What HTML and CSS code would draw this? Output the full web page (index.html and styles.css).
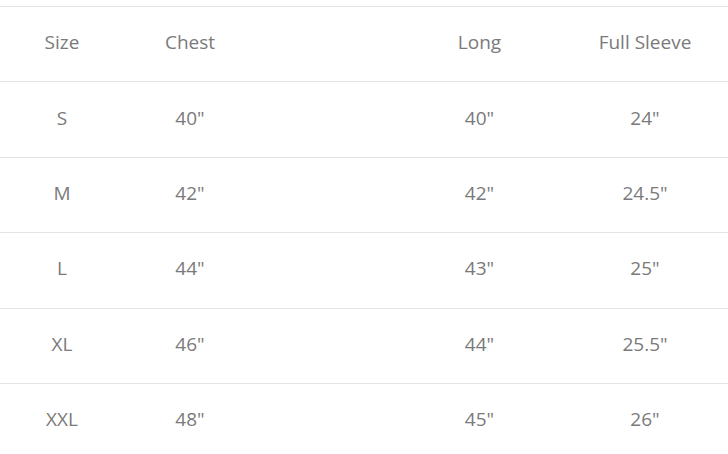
FILE: index.html
```html
<!DOCTYPE html>
<html>
<head>
<meta charset="utf-8">
<link rel="stylesheet" href="styles.css">
</head>
<body>
<div class="wrap">
  <table class="sizes">
    <colgroup>
      <col class="c1"><col class="c2"><col class="c3"><col class="c4"><col class="c5">
    </colgroup>
    <tr class="head"><td>Size</td><td>Chest</td><td></td><td>Long</td><td>Full Sleeve</td></tr>
    <tr><td>S</td><td>40"</td><td></td><td>40"</td><td>24"</td></tr>
    <tr><td>M</td><td>42"</td><td></td><td>42"</td><td>24.5"</td></tr>
    <tr><td>L</td><td>44"</td><td></td><td>43"</td><td>25"</td></tr>
    <tr><td>XL</td><td>46"</td><td></td><td>44"</td><td>25.5"</td></tr>
    <tr><td>XXL</td><td>48"</td><td></td><td>45"</td><td>26"</td></tr>
  </table>
</div>
</body>
</html>
```
FILE: styles.css
```css
html, body {
  margin: 0;
  padding: 0;
  background: #fff;
}
.wrap {
  padding-top: 6px;
}
.sizes {
  width: 728px;
  border-collapse: collapse;
  table-layout: fixed;
  font-family: "Open Sans", "Noto Sans", sans-serif;
  font-size: 19px;
  color: #7a7a7a;
}
.c1 { width: 124px; }
.c2 { width: 132px; }
.c3 { width: 141px; }
.c4 { width: 165px; }
.c5 { width: 166px; }
.sizes tr {
  border-top: 1px solid #e3e3e3;
  height: 75.4px;
}
.sizes td {
  text-align: center;
  vertical-align: middle;
  padding: 0 0 4px 0;
}
```
